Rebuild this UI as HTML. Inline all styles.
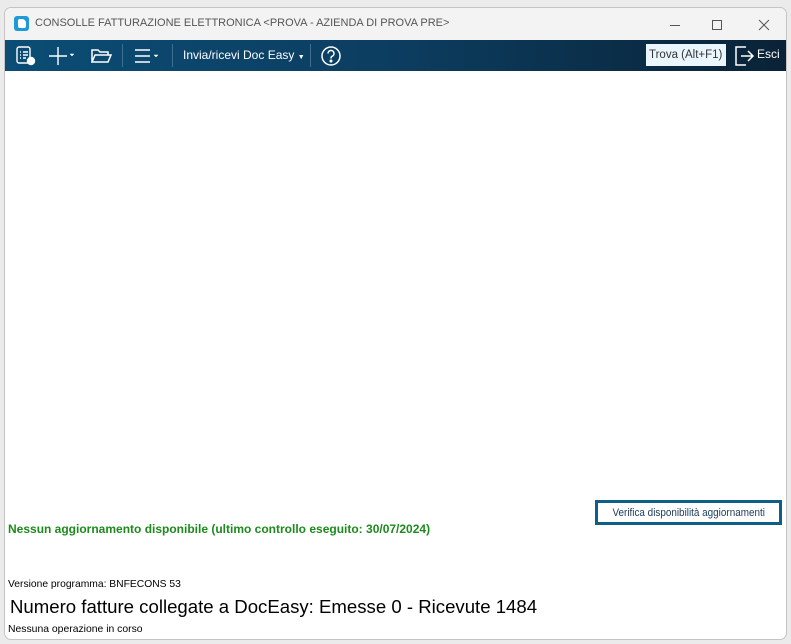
<!DOCTYPE html>
<html><head><meta charset="utf-8"><style>
*{margin:0;padding:0;box-sizing:border-box}
body{width:791px;height:644px;background:#ebebeb;font-family:"Liberation Sans",sans-serif;position:relative;overflow:hidden}
.win{position:absolute;left:4px;top:7px;width:783px;height:633px;background:#fff;border:1px solid #c4c4c4;border-radius:7px;overflow:hidden}
.title{position:absolute;left:0;top:0;width:100%;height:32px;background:#f3f3f3}
.title .t{position:absolute;left:30px;top:9px;font-size:11px;color:#555;white-space:nowrap}
.logo{position:absolute;left:9px;top:8px;width:15px;height:15px;background:#1f9ad6;border-radius:3px}
.logo:after{content:"";position:absolute;left:4px;top:3px;width:8px;height:9px;background:#fff;border-radius:2px 4px 2px 2px}
.tb{position:absolute;left:0;top:32px;width:100%;height:31px;background:linear-gradient(90deg,#0b4d75,#0c3d60 50%,#0a2236)}
.sep{position:absolute;top:4px;width:1px;height:23px;background:#3f6f8f}
.w{color:#fff;position:absolute}
.g{position:absolute;top:514px;left:3px;font-size:12px;font-weight:bold;color:#1d8a1d;white-space:nowrap}
</style></head><body>
<div class="win">
<div class="title"><div class="logo"></div><div class="t">CONSOLLE FATTURAZIONE ELETTRONICA &lt;PROVA - AZIENDA DI PROVA PRE&gt;</div>
<svg style="position:absolute;left:665px;top:10px" width="110" height="14" stroke="#555" fill="none" stroke-width="1"><line x1="0" y1="7.5" x2="10" y2="7.5"/><rect x="42.5" y="2.5" width="9" height="9"/><path d="M89 2l10 10M99 2l-10 10"/></svg>
</div>
<div class="tb">
<svg class="w" style="left:10px;top:5px" width="22" height="22" stroke="#fff" fill="none" stroke-width="1.4"><rect x="2" y="2" width="13" height="16" rx="2"/><path d="M5 7h1M8 7h5M5 10h1M8 10h5M5 13h1M8 13h3"/><circle cx="16" cy="16" r="3.5" fill="#fff"/></svg>
<svg class="w" style="left:44px;top:6px" width="30" height="20" stroke="#fff" fill="none" stroke-width="1.4"><path d="M9 1v18M0 10h18"/><path d="M21 8l2 2 2-2z" fill="#fff" stroke-width=".5"/></svg>
<svg class="w" style="left:86px;top:8px" width="22" height="16" stroke="#fff" fill="none" stroke-width="1.5"><path d="M1 14V2h6l2 2h8v3M1 14l3-7h16l-3 7z"/></svg>
<div class="sep" style="left:117px"></div>
<svg class="w" style="left:129px;top:8px" width="30" height="16" stroke="#fff" fill="none" stroke-width="1.4"><path d="M1 2h15M1 8h15M1 14h15"/><path d="M20 7l2 2 2-2z" fill="#fff" stroke-width=".5"/></svg>
<div class="sep" style="left:167px"></div>
<div class="w" style="left:178px;top:8px;font-size:12px">Invia/ricevi Doc Easy <span style="font-size:7px">▼</span></div>
<div class="sep" style="left:305px"></div>
<svg class="w" style="left:315px;top:5px" width="22" height="22" stroke="#fff" fill="none" stroke-width="1.5"><circle cx="11" cy="11" r="9"/><path d="M8 8.5a3 3 0 1 1 4 2.8c-1 .4-1 1-1 2.2"/><circle cx="11" cy="16" r=".8" fill="#fff"/></svg>
<div style="position:absolute;left:641px;top:4px;width:80px;height:22px;background:#eaf6fd;font-size:11.5px;color:#333;padding:5px 0 0 3px;white-space:nowrap">Trova (Alt+F1)</div>
<svg class="w" style="left:729px;top:5px" width="22" height="22" stroke="#fff" fill="none" stroke-width="1.5"><path d="M12 2H2v18h10"/><path d="M7 11h12M14 6l5 5-5 5"/></svg>
<div class="w" style="left:752px;top:7px;font-size:12px">Esci</div>
</div>
<div style="position:absolute;left:590px;top:492px;width:187px;height:25px;border:3px solid #0e5f86;background:#fff;font-size:11px;color:#1a3a5a;text-align:center;padding-top:4px;white-space:nowrap"><span style="display:inline-block;transform:scaleX(.9)">Verifica disponibilità aggiornamenti</span></div>
<div class="g">Nessun aggiornamento disponibile (ultimo controllo eseguito: 30/07/2024)</div>
<div style="position:absolute;left:3px;top:571px;font-size:10.3px;white-space:nowrap">Versione programma: BNFECONS 53</div>
<div style="position:absolute;left:5px;top:588px;font-size:18.6px;white-space:nowrap">Numero fatture collegate a DocEasy: Emesse 0 - Ricevute 1484</div>
<div style="position:absolute;left:3px;top:616px;font-size:10.4px;white-space:nowrap">Nessuna operazione in corso</div>
</div>
</body></html>
